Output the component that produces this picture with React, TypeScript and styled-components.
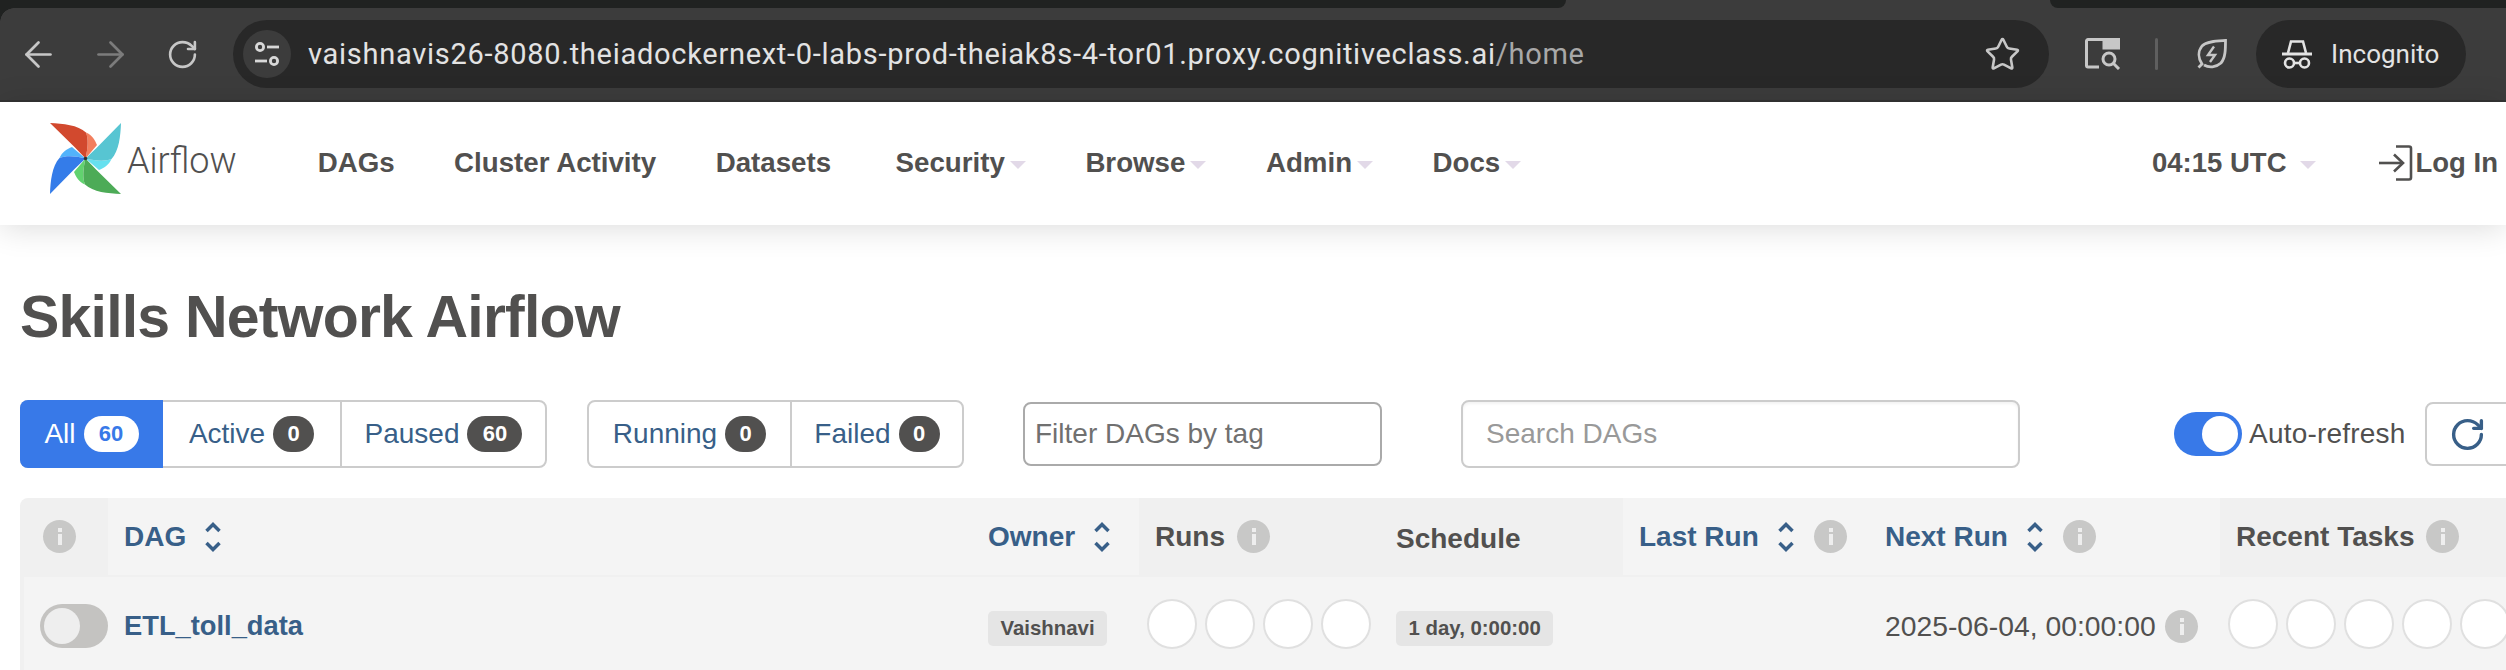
// App.tsx
import React from "react";
import styled, { createGlobalStyle } from "styled-components";
import { ArrowLeft, ArrowRight, RotateCw, Star } from "lucide-react";

const GlobalStyle = createGlobalStyle`
  html, body {
    margin: 0;
    padding: 0;
    background: #fff;
    overflow: hidden;
  }
  * {
    box-sizing: border-box;
  }
`;

const Page = styled.div`
  width: 2506px;
  height: 670px;
  overflow: hidden;
  font-family: "Liberation Sans", Arial, sans-serif;
  color: #51504f;
`;

/* browser chrome */

const Chrome = styled.div`
  height: 102px;
  background: #3c3c3c;
  font-family: Roboto, "Liberation Sans", sans-serif;
`;

const TabStrip = styled.div`
  height: 8px;
  display: flex;
  justify-content: space-between;
`;

const TabPiece = styled.div<{ $w: number; $side: "left" | "right" }>`
  width: ${(p) => p.$w}px;
  background: #202221;
  border-radius: ${(p) => (p.$side === "left" ? "0 0 10px 0" : "0 0 0 14px")};
`;

const Toolbar = styled.div`
  height: 94px;
  padding: 12px 40px 12px 26px;
  display: flex;
  align-items: center;
  border-bottom: 2px solid #333;
  position: relative;

  &::before {
    content: "";
    position: absolute;
    top: 0;
    left: 0;
    width: 14px;
    height: 14px;
    background: radial-gradient(circle at 14px 14px, transparent 13.5px, #202221 14px);
  }
`;

const NavIcon = styled.div<{ $dim?: boolean }>`
  width: 24px;
  margin-right: 48px;
  display: flex;
  justify-content: center;
  color: ${(p) => (p.$dim ? "#7c7c7c" : "#c7c7c7")};

  svg {
    flex: none;
  }
`;

const AddressBar = styled.div`
  width: 1817px;
  height: 68px;
  margin-left: -9px;
  padding: 0 28px 0 10px;
  border-radius: 34px;
  background: #282828;
  display: flex;
  align-items: center;
`;

const SiteInfo = styled.div`
  width: 48px;
  height: 48px;
  border-radius: 50%;
  background: #3c3c3c;
  margin-right: 17px;
  display: flex;
  align-items: center;
  justify-content: center;
  color: #d8d8d8;
`;

const Url = styled.div`
  flex: 1;
  font-size: 29px;
  letter-spacing: 0.72px;
  color: #e3e3e3;
  white-space: nowrap;
`;

const UrlDim = styled.span`
  color: #a8a8a8;
`;

const ToolIcon = styled.div<{ $ml: number }>`
  margin-left: ${(p) => p.$ml}px;
  display: flex;
  color: #c7c7c7;
`;

const ToolDivider = styled.div`
  width: 3px;
  height: 32px;
  margin-left: 34px;
  border-radius: 2px;
  background: #5f5f5f;
`;

const IncognitoPill = styled.div`
  width: 210px;
  height: 68px;
  margin-left: 29px;
  padding-left: 26px;
  border-radius: 34px;
  background: #282828;
  display: flex;
  align-items: center;
  gap: 19px;
  font-size: 26px;
  color: #e3e3e3;
`;

/* airflow navbar */

const NavBar = styled.header`
  height: 123px;
  padding: 0 8px 0 50px;
  display: flex;
  align-items: center;
  background: #fff;
  box-shadow: 0 3px 30px rgba(0, 0, 0, 0.14);
  position: relative;
`;

const Brand = styled.div`
  display: flex;
  align-items: center;
  gap: 6px;
  margin-top: -10px;
`;

const BrandName = styled.span`
  font-family: Roboto, sans-serif;
  font-weight: 300;
  font-size: 36px;
  margin-top: 4px;
`;

const NavLinks = styled.nav`
  display: flex;
  gap: 59.5px;
  margin-left: 81px;
  margin-top: -2px;
`;

const NavLink = styled.a<{ $mr?: number }>`
  display: flex;
  align-items: center;
  gap: 5px;
  margin-right: ${(p) => p.$mr ?? 0}px;
  font-size: 27.7px;
  font-weight: 700;
`;

const Caret = styled.span`
  width: 0;
  height: 0;
  margin-top: 4px;
  border-left: 8px solid transparent;
  border-right: 8px solid transparent;
  border-top: 8px solid #e2d9e8;
`;

const NavRight = styled.div`
  margin-left: auto;
  margin-top: -2px;
  display: flex;
  align-items: center;
  font-size: 27.5px;
  font-weight: 700;
`;

const Clock = styled.span`
  display: flex;
  align-items: center;
  gap: 13px;
  margin-right: 63px;
`;

const LogIn = styled.a`
  display: flex;
  align-items: center;
  gap: 3px;
`;

/* page content */

const Main = styled.main`
  padding: 0 0 0 20px;
`;

const Title = styled.h1`
  margin: 57px 0 0;
  font-size: 59px;
  line-height: 70px;
  letter-spacing: -0.8px;
  font-weight: 700;
`;

const Filters = styled.div`
  margin-top: 48px;
  width: 2600px;
  height: 68px;
  display: flex;
  align-items: center;
`;

const ButtonGroup = styled.div<{ $ml?: number }>`
  height: 68px;
  margin-left: ${(p) => p.$ml ?? 0}px;
  display: flex;
  border: 2px solid #ccc;
  border-radius: 8px;
`;

const FilterButton = styled.a<{ $w: number; $active?: boolean; $first?: boolean }>`
  width: ${(p) => p.$w}px;
  margin: ${(p) => (p.$active ? "-2px 0 -2px -2px" : "0")};
  display: flex;
  align-items: center;
  justify-content: center;
  gap: 8px;
  font-size: 28px;
  color: ${(p) => (p.$active ? "#fff" : "#385f88")};
  background: ${(p) => (p.$active ? "#3879e8" : "transparent")};
  border-radius: ${(p) => (p.$active ? "8px 0 0 8px" : "0")};
  border-left: ${(p) => (p.$first || p.$active ? "0" : "2px solid #ccc")};
`;

const Count = styled.span<{ $active?: boolean; $wide?: boolean }>`
  width: ${(p) => (p.$wide ? 55 : 41)}px;
  height: 36px;
  border-radius: 18px;
  display: flex;
  align-items: center;
  justify-content: center;
  font-size: 22px;
  font-weight: 700;
  background: ${(p) => (p.$active ? "#fff" : "#51504f")};
  color: ${(p) => (p.$active ? "#3879e8" : "#fff")};
`;

const TagFilter = styled.div`
  width: 359px;
  height: 64px;
  margin-left: 59px;
  padding-left: 10px;
  display: flex;
  align-items: center;
  border: 2px solid #aaa;
  border-radius: 8px;
  font-size: 28px;
  color: #707070;
`;

const SearchBox = styled.div`
  width: 559px;
  height: 68px;
  margin-left: 79px;
  padding-left: 23px;
  display: flex;
  align-items: center;
  border: 2px solid #ccc;
  border-radius: 8px;
  font-size: 28px;
  color: #999;
  box-shadow: inset 0 2px 3px rgba(0, 0, 0, 0.05);
`;

const Switch = styled.span<{ $on?: boolean; $ml?: number }>`
  display: block;
  flex: none;
  width: 68px;
  height: 44px;
  margin-left: ${(p) => p.$ml ?? 0}px;
  border-radius: 22px;
  position: relative;
  background: ${(p) => (p.$on ? "#3879e8" : "#c4c3c1")};

  &::after {
    content: "";
    position: absolute;
    top: 4px;
    left: ${(p) => (p.$on ? "28px" : "4px")};
    width: 36px;
    height: 36px;
    border-radius: 50%;
    background: ${(p) => (p.$on ? "#fff" : "#eee")};
  }
`;

const SwitchLabel = styled.span`
  width: 156px;
  margin-left: 7px;
  font-size: 28px;
  letter-spacing: 0.2px;
  white-space: nowrap;
`;

const RefreshButton = styled.div`
  width: 100px;
  height: 64px;
  margin-left: 20px;
  padding-left: 22px;
  display: flex;
  align-items: center;
  border: 2px solid #ccc;
  border-radius: 8px;
  color: #385f88;
`;

const Table = styled.div`
  margin-top: 30px;
  width: 2600px;
`;

const Columns = styled.div`
  display: grid;
  grid-template-columns: 88px 864px 167px 241px 243px 246px 351px 400px;
`;

const HeadRow = styled(Columns)`
  height: 79px;
  border-bottom: 2px solid #f0f0f0;
  border-top-left-radius: 8px;
  overflow: hidden;
`;

const HeadCell = styled.div<{ $shade?: boolean; $drop?: number }>`
  padding: ${(p) => p.$drop ?? 0}px 16px 0;
  display: flex;
  align-items: center;
  font-size: 28px;
  font-weight: 700;
  white-space: nowrap;
  background: ${(p) => (p.$shade ? "#f0f0f0" : "#f4f4f4")};
`;

const SortLabel = styled.span`
  color: #385f88;
`;

const SortIcon = styled.svg`
  margin-left: 18px;
  flex: none;
`;

const InfoDot = styled.span<{ $ml?: number }>`
  flex: none;
  width: 33px;
  height: 33px;
  margin-left: ${(p) => p.$ml ?? 0}px;
  border-radius: 50%;
  background: #c8c8c7;
  position: relative;

  &::before,
  &::after {
    content: "";
    position: absolute;
    left: 15px;
    width: 4px;
    background: #eee;
  }
  &::before {
    top: 8px;
    height: 4px;
  }
  &::after {
    top: 14px;
    height: 11px;
  }
`;

const BodyRow = styled.div`
  display: grid;
  grid-template-columns: 84px 864px 167px 241px 243px 246px 351px 400px;
  height: 98px;
  background: #f4f4f4;
  border-left: 4px solid #f0f0f0;
`;

const BodyCell = styled.div<{ $pad?: number }>`
  padding: 0 ${(p) => p.$pad ?? 16}px;
  display: flex;
  align-items: center;
`;

const ToggleCell = styled.div`
  padding-left: 16px;
  display: flex;
  align-items: center;
`;

const DagLink = styled.a`
  font-size: 27.3px;
  font-weight: 700;
  color: #385f88;
`;

const Chip = styled.span`
  height: 35px;
  margin-top: 5px;
  padding: 0 12.5px;
  display: flex;
  align-items: center;
  border-radius: 5px;
  background: #e5e5e5;
  font-size: 20.4px;
  font-weight: 700;
  white-space: nowrap;
`;

const Circles = styled.div`
  display: flex;
  gap: 8px;
  margin-top: -4px;
`;

const Circle = styled.span`
  flex: none;
  width: 50px;
  height: 50px;
  border-radius: 50%;
  background: #fff;
  border: 2px solid #e0e0e0;
`;

const NextRunText = styled.span`
  font-size: 28.3px;
  white-space: nowrap;
`;

const PinWheelBlade = ({ angle }: { angle: number }) => {
  const colors: Record<number, [string, string]> = {
    0: ["#d2492e", "#f27f5e"],
    90: ["#57c5d2", "#66e0ef"],
    180: ["#4dab57", "#62d26f"],
    270: ["#347ce9", "#52b3fb"],
  };
  return (
    <g transform={`rotate(${angle} 35.5 35.5)`}>
      <path d="M35.5 35.5C38 25 38.5 16 36 9.5C42 12 45 17 47 22Z" fill={colors[angle][1]} />
      <path d="M35.5 35.5L25 24.5L0 0C13 .5 28 2 36 9.5C38.5 16 38 25 35.5 35.5Z" fill={colors[angle][0]} />
    </g>
  );
};

const Logo = () => (
  <svg width="71" height="71" viewBox="0 0 71 71">
    {[0, 90, 180, 270].map((a) => (
      <PinWheelBlade key={a} angle={a} />
    ))}
    <circle cx="35.5" cy="35.5" r="1.8" fill="#333" />
  </svg>
);

const SortArrows = () => (
  <SortIcon width="18" height="30" viewBox="0 0 18 30" fill="none" stroke="#385f88" strokeWidth="3.5">
    <path d="M2.5 9L9 2.5L15.5 9" />
    <path d="M2.5 21L9 27.5L15.5 21" />
  </SortIcon>
);

const TuneIcon = () => (
  <svg width="26" height="26" viewBox="0 0 26 26" fill="none" stroke="currentColor" strokeWidth="2.8">
    <circle cx="6" cy="6" r="3.6" />
    <path d="M13 6H25" />
    <path d="M1 20H13" />
    <circle cx="20" cy="20" r="3.6" />
  </svg>
);

const LensIcon = () => (
  <svg width="36" height="32" viewBox="0 0 36 32" fill="none" stroke="currentColor" strokeWidth="3">
    <path d="M14 29H3a1.5 1.5 0 0 1-1.5-1.5V3A1.5 1.5 0 0 1 3 1.5H32A1.5 1.5 0 0 1 33.5 3V10" />
    <path d="M19 1.5H33.5V10H19Z" fill="currentColor" />
    <circle cx="24" cy="21" r="6" />
    <path d="M28.5 25.5L34 31" />
  </svg>
);

const LeafIcon = () => (
  <svg width="30" height="30" viewBox="0 0 30 30" fill="none" stroke="currentColor" strokeWidth="2.8">
    <path d="M1.5 28.5L5 25C1 19 1 12 5 7C10 2 20 2 28.5 1.5C28.5 10 28.5 19 24 24C19 28.5 12 29 7 26" />
    <path d="M17 7.5L11 16H18L13 23" strokeWidth="2.4" />
  </svg>
);

const HatIcon = () => (
  <svg width="30" height="30" viewBox="0 0 30 30" fill="none" stroke="currentColor" strokeWidth="2.6">
    <path d="M6 14L9 2.5H21L24 14" />
    <path d="M0 15H30" strokeWidth="3" />
    <circle cx="7.5" cy="24" r="4.5" />
    <circle cx="22.5" cy="24" r="4.5" />
    <path d="M12 24H18" />
  </svg>
);

const LoginIcon = () => (
  <svg width="34" height="36" viewBox="0 0 34 36" fill="none" stroke="#51504f" strokeWidth="2.6">
    <path d="M17 1.5H30a2 2 0 0 1 2 2V32.5a2 2 0 0 1-2 2H17" />
    <path d="M0 18H23" />
    <path d="M15 9.5L24 18L15 26.5" />
  </svg>
);

const navItems = ["Security", "Browse", "Admin", "Docs"];

const App: React.FC = () => {
  return (
    <Page>
      <GlobalStyle />
      <Chrome>
        <TabStrip>
          <TabPiece $w={1566} $side="left" />
          <TabPiece $w={456} $side="right" />
        </TabStrip>
        <Toolbar>
          <NavIcon>
            <ArrowLeft size={41} strokeWidth={1.6} />
          </NavIcon>
          <NavIcon $dim>
            <ArrowRight size={41} strokeWidth={1.6} />
          </NavIcon>
          <NavIcon>
            <RotateCw size={33} strokeWidth={1.9} />
          </NavIcon>
          <AddressBar>
            <SiteInfo>
              <TuneIcon />
            </SiteInfo>
            <Url>
              vaishnavis26-8080.theiadockernext-0-labs-prod-theiak8s-4-tor01.proxy.cognitiveclass.ai
              <UrlDim>/home</UrlDim>
            </Url>
            <Star size={37} strokeWidth={1.7} color="#c7c7c7" />
          </AddressBar>
          <ToolIcon $ml={36}>
            <LensIcon />
          </ToolIcon>
          <ToolDivider />
          <ToolIcon $ml={39}>
            <LeafIcon />
          </ToolIcon>
          <IncognitoPill>
            <HatIcon />
            Incognito
          </IncognitoPill>
        </Toolbar>
      </Chrome>

      <NavBar>
        <Brand>
          <Logo />
          <BrandName>Airflow</BrandName>
        </Brand>
        <NavLinks>
          <NavLink>DAGs</NavLink>
          <NavLink>Cluster Activity</NavLink>
          <NavLink $mr={5}>Datasets</NavLink>
          {navItems.map((item) => (
            <NavLink key={item}>
              {item}
              <Caret />
            </NavLink>
          ))}
        </NavLinks>
        <NavRight>
          <Clock>
            04:15 UTC
            <Caret />
          </Clock>
          <LogIn>
            <LoginIcon />
            Log In
          </LogIn>
        </NavRight>
      </NavBar>

      <Main>
        <Title>Skills Network Airflow</Title>

        <Filters>
          <ButtonGroup>
            <FilterButton $w={143} $active>
              All <Count $active $wide>60</Count>
            </FilterButton>
            <FilterButton $w={177} $first>
              Active <Count>0</Count>
            </FilterButton>
            <FilterButton $w={205}>
              Paused <Count $wide>60</Count>
            </FilterButton>
          </ButtonGroup>
          <ButtonGroup $ml={40}>
            <FilterButton $w={201} $first>
              Running <Count>0</Count>
            </FilterButton>
            <FilterButton $w={172}>
              Failed <Count>0</Count>
            </FilterButton>
          </ButtonGroup>
          <TagFilter>Filter DAGs by tag</TagFilter>
          <SearchBox>Search DAGs</SearchBox>
          <Switch $on $ml={154} />
          <SwitchLabel>Auto-refresh</SwitchLabel>
          <RefreshButton>
            <RotateCw size={37} strokeWidth={2.2} />
          </RefreshButton>
        </Filters>

        <Table>
          <HeadRow>
            <HeadCell $shade>
              <InfoDot $ml={7} />
            </HeadCell>
            <HeadCell>
              <SortLabel>DAG</SortLabel>
              <SortArrows />
            </HeadCell>
            <HeadCell>
              <SortLabel>Owner</SortLabel>
              <SortArrows />
            </HeadCell>
            <HeadCell $shade>
              Runs <InfoDot $ml={12} />
            </HeadCell>
            <HeadCell $shade $drop={5}>
              Schedule
            </HeadCell>
            <HeadCell>
              <SortLabel>Last Run</SortLabel>
              <SortArrows />
              <InfoDot $ml={19} />
            </HeadCell>
            <HeadCell>
              <SortLabel>Next Run</SortLabel>
              <SortArrows />
              <InfoDot $ml={19} />
            </HeadCell>
            <HeadCell $shade>
              Recent Tasks <InfoDot $ml={12} />
            </HeadCell>
          </HeadRow>
          <BodyRow>
            <ToggleCell>
              <Switch />
            </ToggleCell>
            <BodyCell>
              <DagLink>ETL_toll_data</DagLink>
            </BodyCell>
            <BodyCell>
              <Chip>Vaishnavi</Chip>
            </BodyCell>
            <BodyCell $pad={8}>
              <Circles>
                {[0, 1, 2, 3].map((i) => (
                  <Circle key={i} />
                ))}
              </Circles>
            </BodyCell>
            <BodyCell>
              <Chip>1 day, 0:00:00</Chip>
            </BodyCell>
            <BodyCell />
            <BodyCell>
              <NextRunText>2025-06-04, 00:00:00</NextRunText>
              <InfoDot $ml={9} />
            </BodyCell>
            <BodyCell $pad={8}>
              <Circles>
                {[0, 1, 2, 3, 4].map((i) => (
                  <Circle key={i} />
                ))}
              </Circles>
            </BodyCell>
          </BodyRow>
        </Table>
      </Main>
    </Page>
  );
};

export default App;
